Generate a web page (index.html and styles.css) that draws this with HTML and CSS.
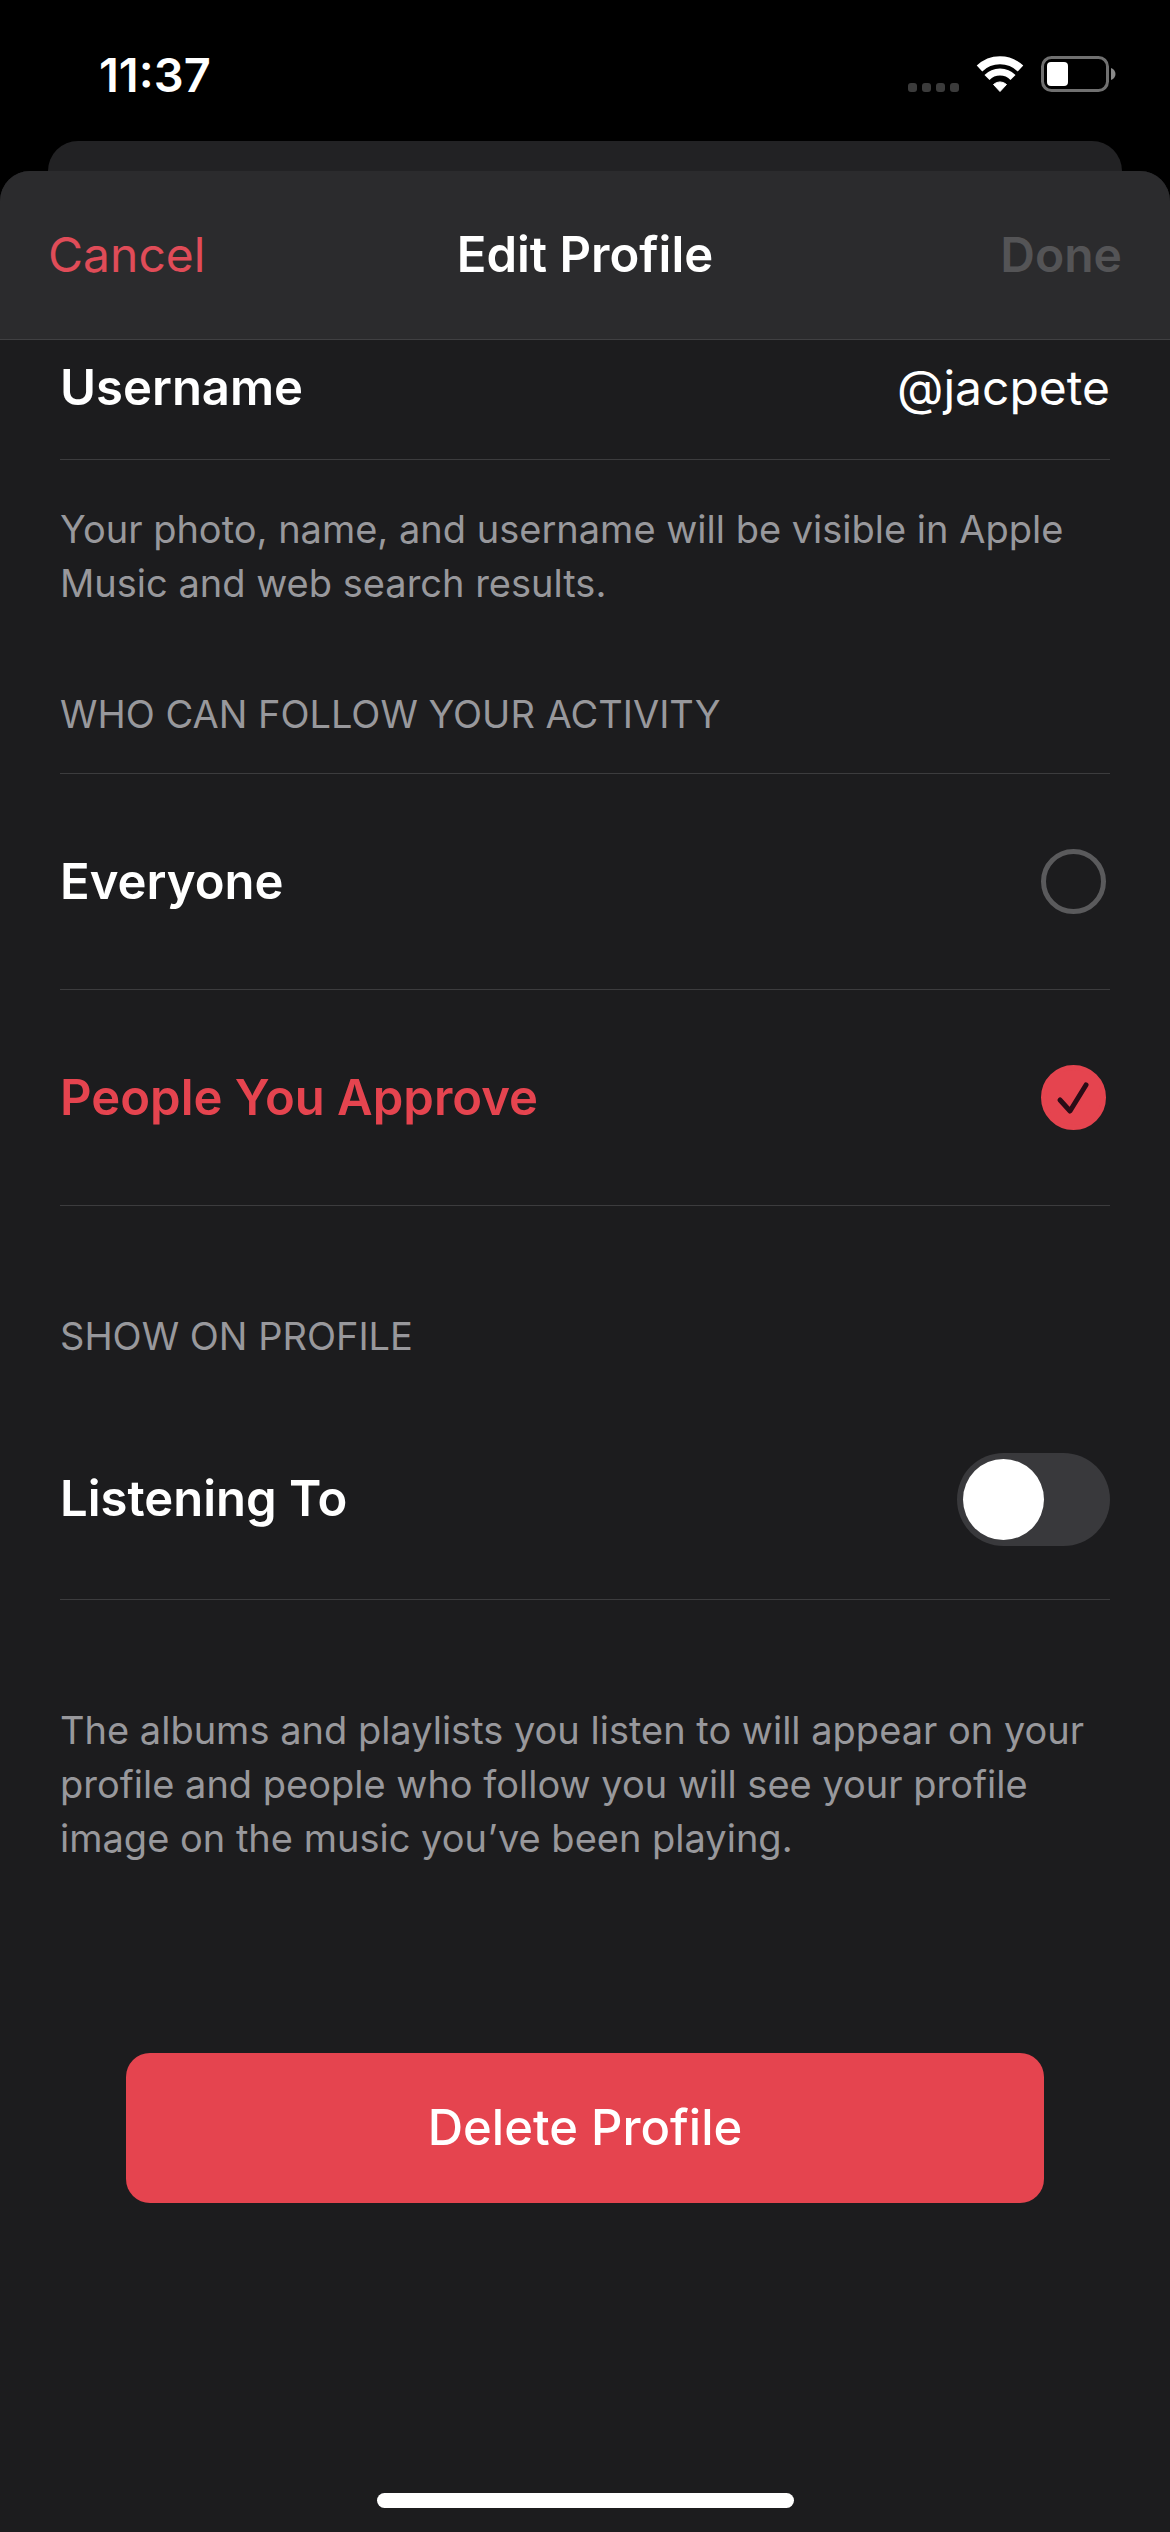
FILE: index.html
```html
<!DOCTYPE html>
<html lang="en">
<head>
  <meta charset="utf-8">
  <meta name="viewport" content="width=device-width, initial-scale=1">
  <title>Edit Profile</title>
  <link rel="stylesheet" href="styles.css">
</head>
<body>
  <div class="screen">
    <div class="status-bar">
      <time class="clock">11:37</time>
      <div class="status-icons">
        <svg class="icon-signal" viewBox="0 0 51 9" aria-label="No signal">
          <g fill="#3b3b3b">
            <rect x="0" width="9" height="9" rx="3"/>
            <rect x="14" width="9" height="9" rx="3"/>
            <rect x="28" width="9" height="9" rx="3"/>
            <rect x="42" width="9" height="9" rx="3"/>
          </g>
        </svg>
        <svg class="icon-wifi" viewBox="0 0 48 36" aria-label="Wi-Fi">
          <g fill="none" stroke="#fff">
            <path stroke-width="8" d="M3.500 12.500A29.500 29.500 0 0 1 44.500 12.500"/>
            <path stroke-width="7" d="M11 21.500A18 18 0 0 1 37 21.500"/>
          </g>
          <path fill="#fff" stroke="#fff" stroke-linejoin="round" d="M24 35.500L17.500 28.500A9.500 9.500 0 0 1 30.500 28.500Z"/>
        </svg>
        <svg class="icon-battery" viewBox="0 0 75 36" aria-label="Battery low">
          <rect x="1.500" y="1.500" width="65" height="33" rx="9" fill="none" stroke="#707070" stroke-width="3"/>
          <rect x="6" y="6" width="21" height="24" rx="4" fill="#fff"/>
          <path d="M70 12C76 14 76 22 70 24Z" fill="#8a8a8a"/>
        </svg>
      </div>
    </div>

    <div class="card-behind"></div>

    <main class="sheet">
      <header class="nav-bar">
        <button class="nav-button cancel" type="button">Cancel</button>
        <h1 class="nav-title">Edit Profile</h1>
        <button class="nav-button done" type="button" disabled>Done</button>
      </header>

      <form class="form">
        <div class="row row-username">
          <label class="row-label" for="username">Username</label>
          <input class="username" id="username" type="text" value="@jacpete">
        </div>
        <p class="note">Your photo, name, and username will be visible in Apple Music and web search results.</p>

        <fieldset class="choices">
          <legend class="section-title">WHO CAN FOLLOW YOUR ACTIVITY</legend>
          <label class="row row-choice">
            <span class="row-label">Everyone</span>
            <span class="tick">
              <input class="tick-input" type="radio" name="followers" value="everyone">
              <svg class="tick-mark" viewBox="0 0 65 65" aria-hidden="true"><path d="M19 35L29 46L45 20"/></svg>
            </span>
          </label>
          <label class="row row-choice">
            <span class="row-label">People You Approve</span>
            <span class="tick">
              <input class="tick-input" type="radio" name="followers" value="approved" checked>
              <svg class="tick-mark" viewBox="0 0 65 65" aria-hidden="true"><path d="M19 35L29 46L45 20"/></svg>
            </span>
          </label>
        </fieldset>

        <h2 class="section-title show-title">SHOW ON PROFILE</h2>
        <div class="row row-switch">
          <label class="row-label" for="listening">Listening To</label>
          <input class="switch" id="listening" type="checkbox" role="switch">
        </div>
        <p class="note note-listening">The albums and playlists you listen to will appear on your profile and people who follow you will see your profile image on the music you’ve been playing.</p>

        <button class="delete" type="button">Delete Profile</button>
      </form>

      <div class="home-indicator"></div>
    </main>
  </div>
</body>
</html>
```

FILE: styles.css
```css
* {
  box-sizing: border-box;
}

body {
  margin: 0;
  background: #000;
  color: #fff;
  font-family: Inter, "Liberation Sans", sans-serif;
  font-size: 48px;
  line-height: 60px;
}

button,
input {
  font: inherit;
  color: inherit;
}

.screen {
  display: flex;
  flex-direction: column;
  min-height: 100vh;
}

/* Status bar */
.status-bar {
  display: flex;
  justify-content: space-between;
  align-items: flex-start;
  height: 141px;
  padding: 45px 54px 0 99px;
}

.clock {
  font-size: 47px;
  font-weight: 600;
}

.status-icons {
  display: flex;
  align-items: flex-end;
  gap: 17px;
  padding-top: 11px;
}

.icon-signal {
  width: 51px;
  height: 9px;
}

.icon-wifi {
  width: 48px;
  height: 36px;
}

.icon-battery {
  width: 75px;
  height: 36px;
}

/* Sheets */
.card-behind {
  height: 30px;
  margin: 0 48px;
  border-radius: 30px 30px 0 0;
  background: #222224;
}

.sheet {
  display: flex;
  flex: 1;
  flex-direction: column;
  border-radius: 30px 30px 0 0;
  background: #1c1c1e;
  overflow: hidden;
}

.nav-bar {
  display: grid;
  grid-template-columns: 1fr auto 1fr;
  align-items: center;
  height: 169px;
  padding: 0 48px;
  border-bottom: 1px solid #404042;
  background: #2b2b2d;
}

.nav-title {
  margin: 0;
  font-size: 49px;
  font-weight: 600;
}

.nav-button {
  padding: 0;
  border: 0;
  background: none;
}

.cancel {
  justify-self: start;
  color: #e04c58;
}

.done {
  justify-self: end;
  color: #545456;
  font-weight: 600;
}

/* Form rows */
.form {
  display: flex;
  flex-direction: column;
  padding: 0 60px;
}

.row {
  display: flex;
  align-items: center;
  justify-content: space-between;
  border-bottom: 1px solid #3c3c3e;
}

.row-label {
  font-size: 49px;
  font-weight: 600;
}

.row-username {
  height: 120px;
  padding-bottom: 24px;
}

.username {
  flex: 1;
  min-width: 0;
  padding: 0;
  border: 0;
  background: none;
  text-align: right;
}

.note {
  margin: 42px 0 0;
  color: #98989c;
  font-size: 38px;
  line-height: 54px;
}

.choices {
  margin: 77px 0 0;
  padding: 0;
  border: 0;
}

.section-title {
  margin: 0;
  padding: 0;
  color: #98989c;
  font-size: 38px;
  font-weight: 400;
  line-height: 54px;
}

.choices .section-title {
  width: 100%;
  padding-bottom: 32px;
  border-bottom: 1px solid #3c3c3e;
}

.row-choice {
  height: 216px;
  padding-right: 4px;
}

.row-choice:has(:checked) {
  color: #e5444f;
}

.tick {
  display: grid;
}

.tick-input,
.tick-mark {
  grid-area: 1 / 1;
  width: 65px;
  height: 65px;
  margin: 0;
}

.tick-input {
  appearance: none;
  border: 5px solid #5a5a5c;
  border-radius: 50%;
}

.tick-input:checked {
  border-color: #e5444f;
  background: #e5444f;
}

.tick-mark {
  fill: none;
  stroke: #2a0c16;
  stroke-width: 5;
  stroke-linecap: round;
  stroke-linejoin: round;
  visibility: hidden;
  pointer-events: none;
}

.tick-input:checked + .tick-mark {
  visibility: visible;
}

.show-title {
  margin-top: 103px;
}

.row-switch {
  height: 201px;
  margin-top: 36px;
}

.switch {
  appearance: none;
  display: flex;
  width: 153px;
  height: 93px;
  margin: 0;
  padding: 6px;
  border-radius: 47px;
  background: #39393c;
}

.switch::before {
  content: "";
  width: 81px;
  height: 81px;
  border-radius: 50%;
  background: #fff;
}

.switch:checked {
  justify-content: flex-end;
  background: #30d158;
}

.note-listening {
  margin-top: 103px;
}

.delete {
  height: 150px;
  margin: 188px 66px 0;
  padding: 0;
  border: 0;
  border-radius: 24px;
  background: #e5444f;
  font-size: 49px;
  font-weight: 500;
}

.home-indicator {
  width: 417px;
  height: 15px;
  margin: auto auto 24px;
  border-radius: 8px;
  background: #fff;
}
```
